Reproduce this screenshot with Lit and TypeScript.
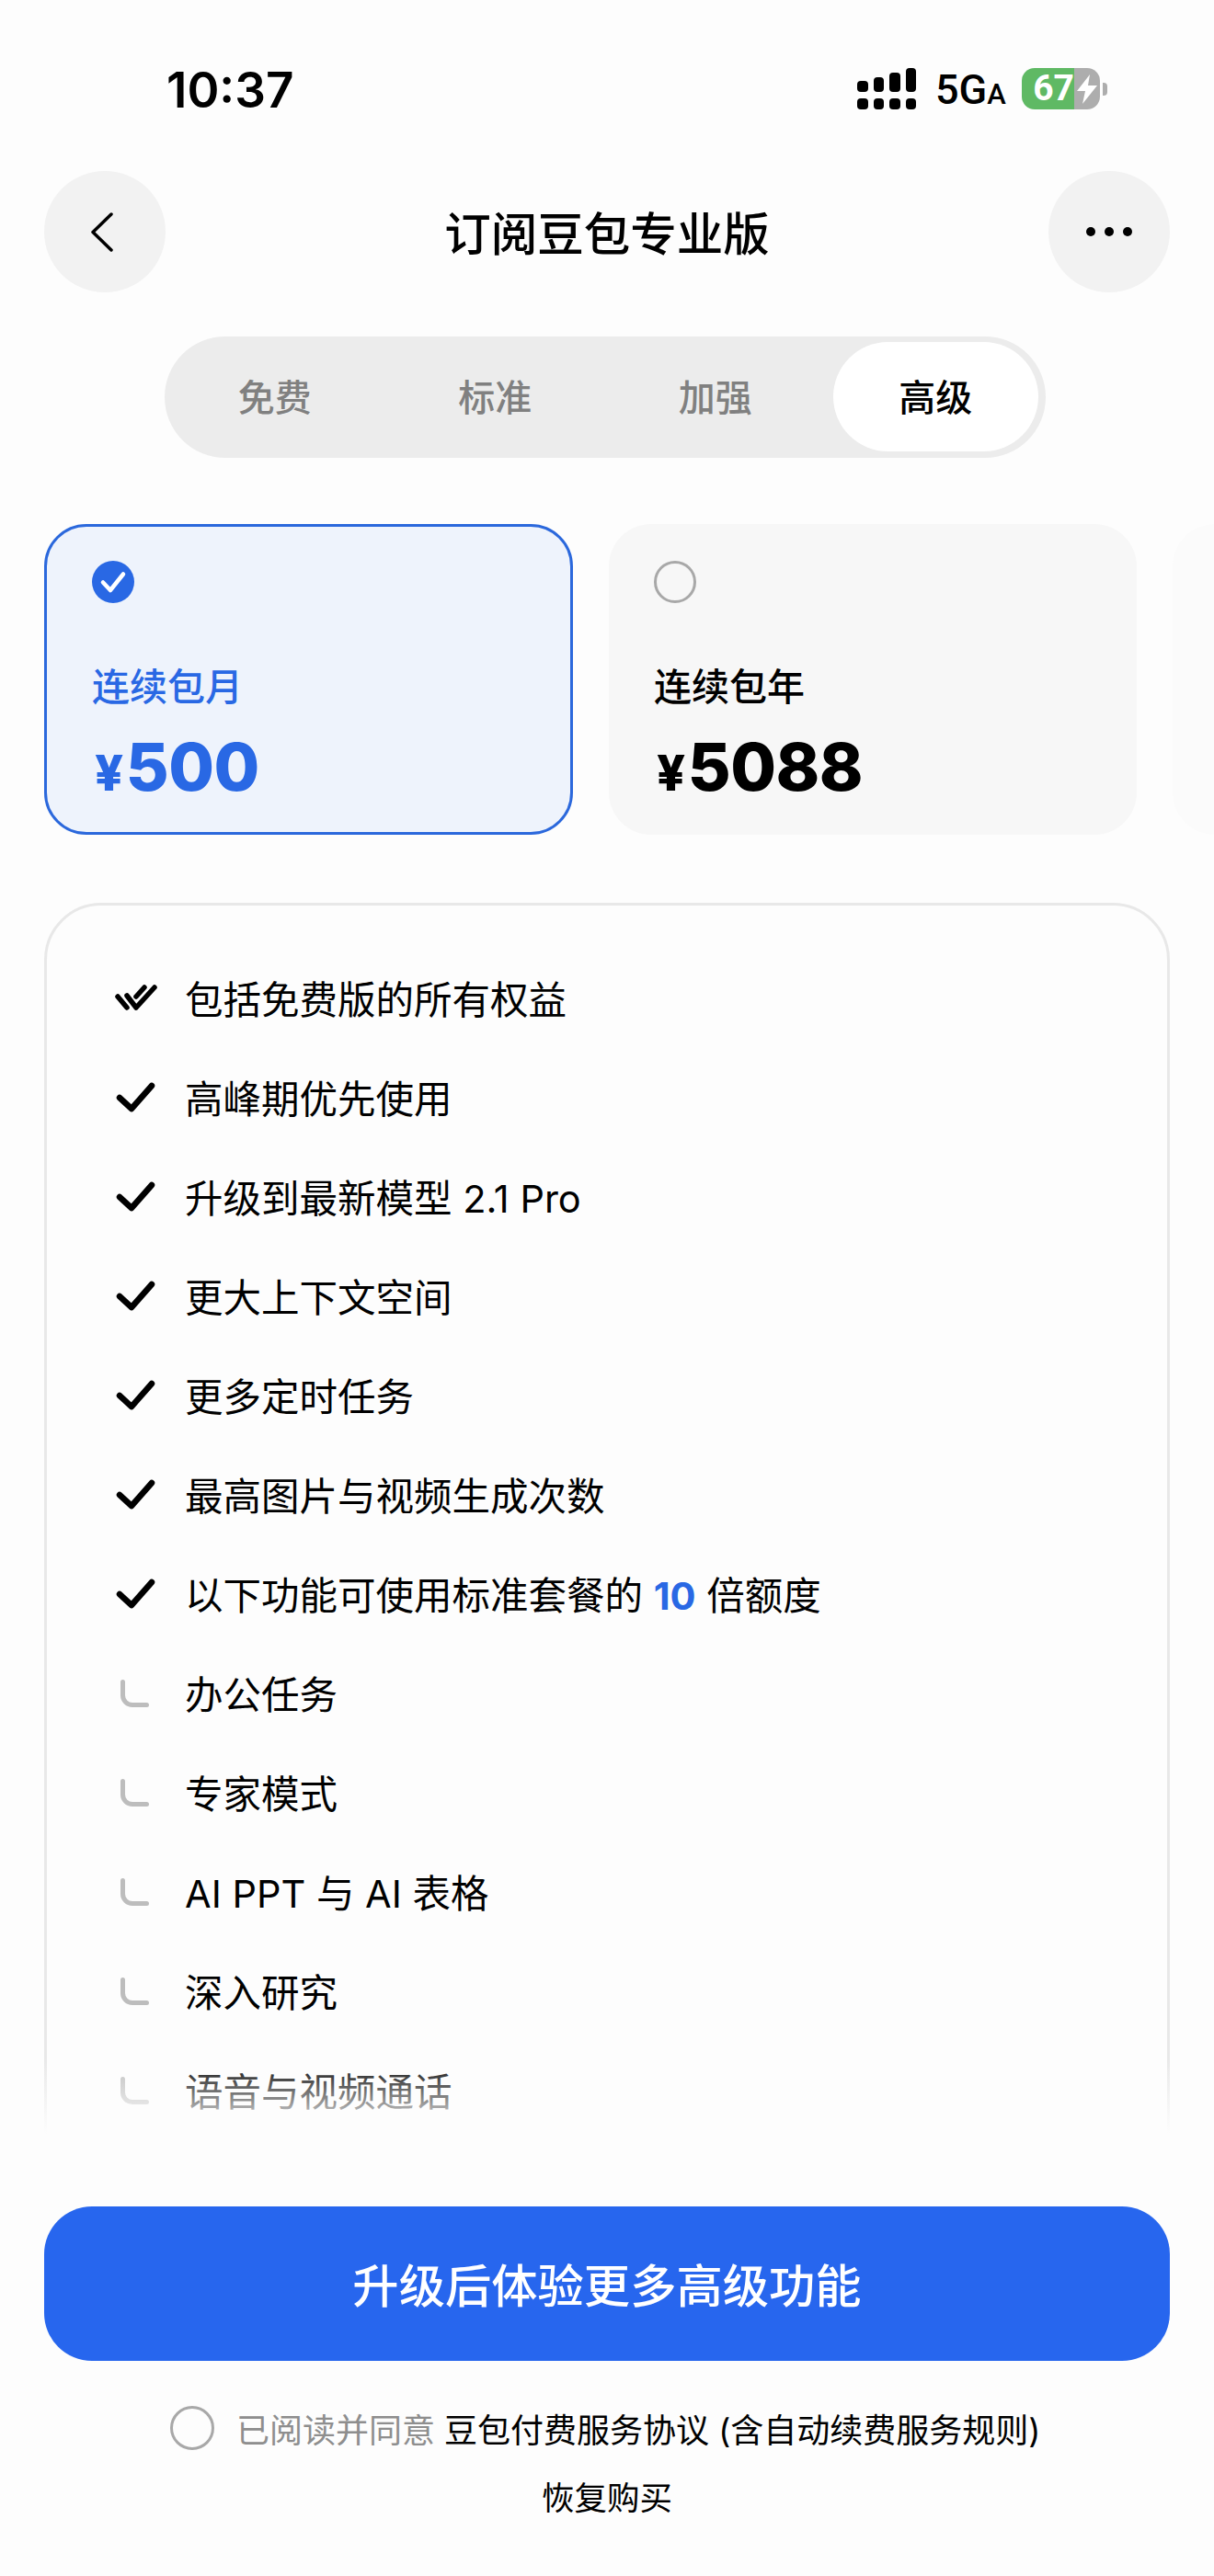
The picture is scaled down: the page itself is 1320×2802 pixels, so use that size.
import { LitElement, html, css, svg } from 'lit';
import { customElement, state } from 'lit/decorators.js';
import { classMap } from 'lit/directives/class-map.js';

const SIGNAL_BARS = [12, 16, 21, 26];

const checkIcon = html`<svg class="icon" viewBox="0 0 48 40">
    <path d="M6 21 19 33 41 8" fill="none" stroke="#000" stroke-width="6.5" stroke-linecap="round" stroke-linejoin="round"/>
</svg>`;

const doubleCheckIcon = html`<svg class="icon" viewBox="0 0 48 40">
    <g fill="none" stroke="#000" stroke-width="5.5" stroke-linecap="round" stroke-linejoin="round">
        <path d="M4 19 14 31"/>
        <path d="M14 18 24 31 44 9"/>
        <path d="M24 19 33 9"/>
    </g>
</svg>`;

const subIcon = html`<svg class="icon" viewBox="0 0 48 40">
    <path d="M9.5 8.5V23A10.500 10.500 0 0 0 20 33.500H35.500" fill="none" stroke="#bdbdbd" stroke-width="5" stroke-linecap="round"/>
</svg>`;

interface Feature {
    icon: 'double' | 'check' | 'sub';
    text: unknown;
}

const FEATURES: Feature[] = [
    { icon: 'double', text: '包括免费版的所有权益' },
    { icon: 'check', text: '高峰期优先使用' },
    { icon: 'check', text: '升级到最新模型 2.1 Pro' },
    { icon: 'check', text: '更大上下文空间' },
    { icon: 'check', text: '更多定时任务' },
    { icon: 'check', text: '最高图片与视频生成次数' },
    { icon: 'check', text: html`以下功能可使用标准套餐的 <b class="accent">10</b> 倍额度` },
    { icon: 'sub', text: '办公任务' },
    { icon: 'sub', text: '专家模式' },
    { icon: 'sub', text: 'AI PPT 与 AI 表格' },
    { icon: 'sub', text: '深入研究' },
    { icon: 'sub', text: '语音与视频通话' },
];

const PLANS = [
    { name: '连续包月', price: '500' },
    { name: '连续包年', price: '5088' },
    { name: '', price: '' },
];

@customElement('app-root')
export class AppRoot extends LitElement {
    static styles = css`
        :host {
            display: block;
            width: 1320px;
            height: 2802px;
            overflow: hidden;
            background: #fdfdfd;
            color: #000;
            font-family: Inter, "Noto Sans CJK SC", sans-serif;
        }

        * {
            box-sizing: border-box;
        }

        /* status bar */
        .status {
            height: 186px;
            padding: 74px 116px 0 181px;
            display: flex;
            justify-content: space-between;
            align-items: flex-start;
        }

        .time {
            font-size: 53px;
            line-height: 48px;
            font-weight: 600;
        }

        .status-right {
            display: flex;
            align-items: center;
            height: 45px;
        }

        .signal {
            display: flex;
            align-items: flex-start;
            gap: 6px;
            height: 45px;
        }

        .signal-col {
            width: 11.500px;
            height: 45px;
            display: flex;
            flex-direction: column;
            justify-content: flex-end;
            gap: 7px;
        }

        .signal-col i {
            display: block;
            background: #000;
            border-radius: 4px;
        }

        .signal-dot {
            height: 12px;
        }

        .network {
            margin-left: 21px;
            padding-top: 6px;
            font-family: Roboto, sans-serif;
            font-size: 45px;
            line-height: 45px;
            font-weight: 500;
            width: 74px;
            white-space: nowrap;
        }

        .network small {
            font-size: 31px;
        }

        .battery {
            margin-left: 20px;
            display: flex;
            width: 85px;
            height: 45px;
            border-radius: 14px;
            overflow: hidden;
        }

        .battery-level {
            width: 57px;
            background: #5fb964;
            color: #fff;
            font-family: Roboto, sans-serif;
            font-size: 39px;
            font-weight: 700;
            line-height: 45px;
            text-align: right;
        }

        .battery-rest {
            flex: 1;
            background: #adadad;
            display: flex;
            align-items: center;
            justify-content: center;
        }

        .battery-nub {
            width: 5px;
            height: 14px;
            margin-left: 3px;
            background: #adadad;
            border-radius: 0 4px 4px 0;
        }

        /* navigation */
        .nav {
            height: 132px;
            padding: 0 48px;
            display: flex;
            align-items: center;
            justify-content: space-between;
        }

        .nav-btn {
            width: 132px;
            height: 132px;
            border-radius: 50%;
            background: #f2f2f2;
            display: flex;
            align-items: center;
            justify-content: center;
        }

        .title {
            padding-top: 5px;
            font-size: 50.500px;
            font-weight: 500;
            line-height: 70px;
        }

        /* tier tabs */
        .tabs {
            margin: 48px 0 0 179px;
            width: 958px;
            height: 132px;
            border-radius: 66px;
            background: #ececec;
            display: grid;
            grid-template-columns: repeat(4, 1fr);
            padding: 6px 0 7px;
        }

        .tab {
            display: flex;
            align-items: center;
            justify-content: center;
            border-radius: 60px;
            padding-bottom: 3px;
            font-size: 40px;
            font-weight: 500;
            color: #808080;
        }

        .tab.active {
            margin: 0 8px;
            background: #fff;
            color: #000;
        }

        /* plan cards */
        .plans {
            margin-top: 72px;
            padding-left: 48px;
            display: flex;
            gap: 39px;
        }

        .plan {
            flex: none;
            width: 574px;
            height: 338px;
            border: 3px solid transparent;
            border-radius: 46px;
            background: #f7f7f7;
            padding: 37px 0 0 46px;
        }

        .plan.selected {
            width: 575px;
            padding-left: 49px;
            background: #eef3fc;
            border-color: #2b68dc;
            color: #2968e4;
        }

        .plan.ghost {
            background: #fbfbfb;
        }

        .radio {
            display: block;
            width: 46px;
            height: 46px;
        }

        .radio.empty {
            border: 3px solid #a8a8a8;
            border-radius: 50%;
        }

        .plan-name {
            margin-top: 66px;
            font-size: 41px;
            font-weight: 500;
            line-height: 50px;
        }

        .plan-price {
            margin-top: 22px;
            display: flex;
            align-items: baseline;
            font-size: 72px;
            line-height: 80px;
            font-weight: 800;
            letter-spacing: -0.5px;
        }

        .plan-price span {
            font-size: 54px;
            margin: 0 3px 0 3px;
        }

        /* feature list */
        .features-clip {
            position: relative;
            margin: 74px 48px 0;
            height: 1348px;
            overflow: hidden;
        }

        .features {
            height: 1500px;
            border: 3px solid #e8e8e8;
            border-radius: 62px;
            padding: 46px 0 0 73px;
        }

        .feature {
            height: 108px;
            display: flex;
            align-items: center;
            gap: 29px;
            font-size: 41.500px;
        }

        .icon {
            flex: none;
            width: 48px;
            height: 40px;
        }

        .accent {
            color: #2968e4;
            font-weight: 700;
        }

        .fade {
            position: absolute;
            left: 0;
            right: 0;
            bottom: 0;
            height: 92px;
            background: linear-gradient(to bottom, rgba(253, 253, 253, 0), #fdfdfd 90%);
        }

        /* footer */
        .cta {
            margin: 70px 48px 0;
            height: 168px;
            border-radius: 52px;
            background: #2766ee;
            color: #fff;
            padding-bottom: 2px;
            font-size: 50.300px;
            font-weight: 500;
            display: flex;
            align-items: center;
            justify-content: center;
        }

        .agree {
            margin-top: 49px;
            padding-left: 185px;
            display: flex;
            align-items: center;
            gap: 24px;
            height: 48px;
            font-size: 36px;
            white-space: nowrap;
        }

        .agree .radio {
            flex: none;
            width: 48px;
            height: 48px;
        }

        .agree-muted {
            color: #8e8e8e;
            margin-right: 10px;
        }

        .restore {
            margin-top: 28px;
            text-align: center;
            font-size: 35.500px;
            line-height: 50px;
        }
    `;

    @state()
    private tier = '高级';

    private renderStatus() {
        return html`
            <div class="status">
                <div class="time">10:37</div>
                <div class="status-right">
                    <div class="signal">
                        ${SIGNAL_BARS.map(h => html`
                            <div class="signal-col">
                                <i style="height:${h}px"></i>
                                <i class="signal-dot"></i>
                            </div>
                        `)}
                    </div>
                    <div class="network">5G<small>A</small></div>
                    <div class="battery">
                        <div class="battery-level">67</div>
                        <div class="battery-rest">
                            <svg width="22" height="32" viewBox="0 0 22 32">
                                <path d="M14 0 0 18H9L6 32 22 12H12Z" fill="#fff"/>
                            </svg>
                        </div>
                    </div>
                    <div class="battery-nub"></div>
                </div>
            </div>
        `;
    }

    private renderPlan(plan: { name: string; price: string }, index: number) {
        if (!plan.name) {
            return html`<div class="plan ghost"></div>`;
        }
        const selected = index === 0;
        return html`
            <div class=${classMap({ plan: true, selected })}>
                ${selected
                    ? html`<svg class="radio" viewBox="0 0 46 46">
                        <circle cx="23" cy="23" r="23" fill="#2968e4"/>
                        <path d="M12 23.500 20 32 34 14.500" fill="none" stroke="#fff" stroke-width="4.500" stroke-linecap="round" stroke-linejoin="round"/>
                    </svg>`
                    : html`<span class="radio empty"></span>`}
                <div class="plan-name">${plan.name}</div>
                <div class="plan-price"><span>¥</span>${plan.price}</div>
            </div>
        `;
    }

    private renderFeatureIcon(icon: Feature['icon']) {
        if (icon === 'double') return doubleCheckIcon;
        return icon === 'check' ? checkIcon : subIcon;
    }

    render() {
        return html`
            ${this.renderStatus()}

            <div class="nav">
                <div class="nav-btn">
                    <svg width="36" height="48" viewBox="0 0 36 48">
                        ${svg`<path d="M25 5 5 24.500 25 44" fill="none" stroke="#000" stroke-width="3.500" stroke-linecap="round" stroke-linejoin="round"/>`}
                    </svg>
                </div>
                <div class="title">订阅豆包专业版</div>
                <div class="nav-btn">
                    <svg width="52" height="12" viewBox="0 0 52 12">
                        <circle cx="6" cy="6" r="5"/>
                        <circle cx="26" cy="6" r="5"/>
                        <circle cx="46" cy="6" r="5"/>
                    </svg>
                </div>
            </div>

            <div class="tabs">
                ${['免费', '标准', '加强', '高级'].map(name => html`
                    <div class=${classMap({ tab: true, active: name === this.tier })}>${name}</div>
                `)}
            </div>

            <div class="plans">
                ${PLANS.map((plan, i) => this.renderPlan(plan, i))}
            </div>

            <div class="features-clip">
                <div class="features">
                    ${FEATURES.map(f => html`
                        <div class="feature">
                            ${this.renderFeatureIcon(f.icon)}
                            <span>${f.text}</span>
                        </div>
                    `)}
                </div>
                <div class="fade"></div>
            </div>

            <div class="cta">升级后体验更多高级功能</div>

            <div class="agree">
                <span class="radio empty"></span>
                <span><span class="agree-muted">已阅读并同意</span>豆包付费服务协议 (含自动续费服务规则)</span>
            </div>

            <div class="restore">恢复购买</div>
        `;
    }
}

declare global {
    interface HTMLElementTagNameMap {
        'app-root': AppRoot;
    }
}
